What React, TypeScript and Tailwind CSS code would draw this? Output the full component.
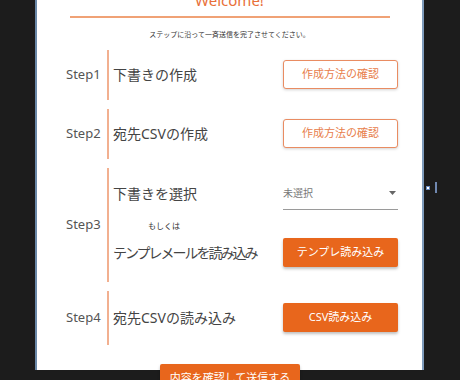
import React from "react";

const font = { fontFamily: '"Noto Sans", "Noto Sans CJK JP", sans-serif' };

function OutlineBtn({ label }: { label: string }) {
  return (
    <button className="w-[115px] h-[29px] rounded-[3px] border-[1.5px] border-[#e98c62] bg-white text-[11px] text-[#e8804c] shadow-[0_1px_3px_rgba(0,0,0,0.18)] flex items-center justify-center">
      {label}
    </button>
  );
}

function FillBtn({ label, w = "w-[115px]" }: { label: string; w?: string }) {
  return (
    <button className={`${w} h-[29px] rounded-[2px] bg-[#e8661c] text-[11px] text-white shadow-[0_2px_3px_rgba(0,0,0,0.25)] flex items-center justify-center`}>
      {label}
    </button>
  );
}

function Row({ step, h, children }: { step: string; h: string; children: React.ReactNode }) {
  return (
    <div className={`flex items-stretch ${h}`}>
      <div className="w-[35px] flex items-center text-[13px] text-[#555]">{step}</div>
      <div className="ml-[6px] w-[2px] bg-[#f2b090]" />
      <div className="flex-1 pl-[4px]">{children}</div>
    </div>
  );
}

export default function App() {
  return (
    <div className="relative w-[460px] h-[380px] overflow-hidden bg-[#1c1c1c]" style={font}>
      <div className="ml-[35px] w-[389px] h-[380px] bg-white border-l-2 border-r-2 border-l-[#6a88a8] border-r-[#7f9cbc]">
        <div className="-mt-[10px] h-[20px] leading-[20px] text-center text-[15px] text-[#e8703a]">Welcome!</div>
        <div className="mt-[6px] ml-[33px] mr-[32px] h-[1.5px] bg-[#f0a276]" />
        <div className="mt-[12px] leading-[10px] text-center text-[7px] text-[#333]">
          ステップに沿って一斉送信を完了させてください。
        </div>
        <div className="mt-[10px] pl-[29px] pr-[24px] flex flex-col gap-[9px]">
          <Row step="Step1" h="h-[50px]">
            <div className="h-full flex items-center justify-between">
              <span className="text-[14px] text-[#444]">下書きの作成</span>
              <OutlineBtn label="作成方法の確認" />
            </div>
          </Row>
          <Row step="Step2" h="h-[50px]">
            <div className="h-full flex items-center justify-between">
              <span className="text-[14px] text-[#444]">宛先CSVの作成</span>
              <OutlineBtn label="作成方法の確認" />
            </div>
          </Row>
          <Row step="Step3" h="h-[114px]">
            <div className="h-full flex flex-col">
              <div className="mt-[10px] h-[32px] flex items-center justify-between">
                <span className="text-[14px] text-[#444]">下書きを選択</span>
                <div className="w-[115px] h-[32px] border-b border-[#9a9a9a] flex items-center justify-between">
                  <span className="text-[10px] text-[#777]">未選択</span>
                  <svg width="7" height="4" viewBox="0 0 7 4" className="mr-[2px]">
                    <path d="M0 0 L7 0 L3.5 4 Z" fill="#666" />
                  </svg>
                </div>
              </div>
              <div className="mt-[10px] h-[12px] leading-[12px] ml-[35px] text-[8px] text-[#333]">もしくは</div>
              <div className="mt-[6px] h-[30px] flex items-center justify-between">
                <span className="text-[14px] text-[#444] tracking-[-2px]">テンプレメールを読み込み</span>
                <FillBtn label="テンプレ読み込み" />
              </div>
            </div>
          </Row>
          <Row step="Step4" h="h-[54px]">
            <div className="h-full flex items-center justify-between">
              <span className="text-[14px] text-[#444]">宛先CSVの読み込み</span>
              <FillBtn label="CSV読み込み" />
            </div>
          </Row>
        </div>
        <div className="mt-[19px] flex justify-center">
          <div className="ml-[1px]">
            <FillBtn label="内容を確認して送信する" w="w-[140px]" />
          </div>
        </div>
      </div>
      <div className="absolute left-[426px] top-[186px] w-[4px] h-[4px] bg-white border border-[#6a8cc0]" />
      <div className="absolute left-[435px] top-[182px] w-[1.5px] h-[11px] bg-[#7088b0]" />
    </div>
  );
}
